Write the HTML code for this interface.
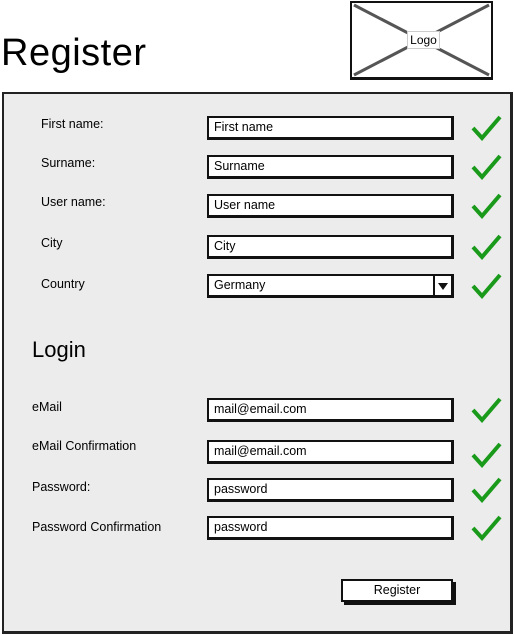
<!DOCTYPE html>
<html><head><style>
body{margin:0;width:514px;height:635px;background:#fff;position:relative;overflow:hidden;font-family:"Liberation Sans",sans-serif;color:#000}
.a{position:absolute}
.lbl{position:absolute;font-size:12.5px}
.in{position:absolute;left:207px;width:237px;height:19px;background:#fff;border:2px solid #111;border-right-width:3px;border-bottom-width:3px;font-size:12.5px;line-height:19px;padding-left:5px;box-sizing:content-box}
.ck{position:absolute;left:470px;width:32px;height:28px}
</style></head><body>
<div class="a" style="left:1px;top:31px;font-size:38px;line-height:44px;letter-spacing:0.5px">Register</div>
<div class="a" style="left:350px;top:1px;width:139px;height:74px;border:2px solid #111;border-bottom-width:3px">
<svg width="139" height="74" style="position:absolute;left:0;top:0"><line x1="2" y1="2" x2="137" y2="72" stroke="#555" stroke-width="3"/><line x1="137" y1="2" x2="2" y2="72" stroke="#555" stroke-width="3"/></svg>
<div class="a" style="left:55px;top:28px;width:31px;height:16px;background:#fff;border:1px solid #ccc;font-size:12px;line-height:16px;text-align:center">Logo</div>
</div>
<div class="a" style="left:2px;top:92px;width:506px;height:537px;background:#ececec;border:2px solid #222;border-right-width:3px;border-bottom-width:3px"></div>

<div class="lbl" style="left:41px;top:117px">First name:</div>
<div class="lbl" style="left:41px;top:156px">Surname:</div>
<div class="lbl" style="left:41px;top:195px">User name:</div>
<div class="lbl" style="left:41px;top:236px">City</div>
<div class="lbl" style="left:41px;top:277px">Country</div>
<div class="a" style="left:32px;top:337px;font-size:22px">Login</div>
<div class="lbl" style="left:32px;top:400px">eMail</div>
<div class="lbl" style="left:32px;top:439px">eMail Confirmation</div>
<div class="lbl" style="left:32px;top:480px">Password:</div>
<div class="lbl" style="left:32px;top:520px">Password Confirmation</div>

<div class="in" style="top:116px">First name</div>
<div class="in" style="top:155px">Surname</div>
<div class="in" style="top:194px">User name</div>
<div class="in" style="top:235px">City</div>
<div class="in" style="top:274px">Germany<div class="a" style="right:0;top:0;width:16px;height:19px;border-left:2px solid #111"><svg width="16" height="19"><path d="M3 7 L13 7 L8 14 Z" fill="#111"/></svg></div></div>
<div class="in" style="top:398px">mail@email.com</div>
<div class="in" style="top:440px">mail@email.com</div>
<div class="in" style="top:478px">password</div>
<div class="in" style="top:516px">password</div>

<svg class="ck" style="top:113px" viewBox="0 0 32 28"><path d="M3 15 L12 25 L30 4" fill="none" stroke="#1a9a1a" stroke-width="4"/></svg>
<svg class="ck" style="top:152px" viewBox="0 0 32 28"><path d="M3 15 L12 25 L30 4" fill="none" stroke="#1a9a1a" stroke-width="4"/></svg>
<svg class="ck" style="top:191px" viewBox="0 0 32 28"><path d="M3 15 L12 25 L30 4" fill="none" stroke="#1a9a1a" stroke-width="4"/></svg>
<svg class="ck" style="top:232px" viewBox="0 0 32 28"><path d="M3 15 L12 25 L30 4" fill="none" stroke="#1a9a1a" stroke-width="4"/></svg>
<svg class="ck" style="top:271px" viewBox="0 0 32 28"><path d="M3 15 L12 25 L30 4" fill="none" stroke="#1a9a1a" stroke-width="4"/></svg>
<svg class="ck" style="top:395px" viewBox="0 0 32 28"><path d="M3 15 L12 25 L30 4" fill="none" stroke="#1a9a1a" stroke-width="4"/></svg>
<svg class="ck" style="top:440px" viewBox="0 0 32 28"><path d="M3 15 L12 25 L30 4" fill="none" stroke="#1a9a1a" stroke-width="4"/></svg>
<svg class="ck" style="top:475px" viewBox="0 0 32 28"><path d="M3 15 L12 25 L30 4" fill="none" stroke="#1a9a1a" stroke-width="4"/></svg>
<svg class="ck" style="top:513px" viewBox="0 0 32 28"><path d="M3 15 L12 25 L30 4" fill="none" stroke="#1a9a1a" stroke-width="4"/></svg>

<div class="a" style="left:341px;top:579px;width:108px;height:19px;background:#fff;border:2px solid #111;box-shadow:3px 3px 0 #111;font-size:12.5px;line-height:19px;text-align:center">Register</div>
</body></html>
